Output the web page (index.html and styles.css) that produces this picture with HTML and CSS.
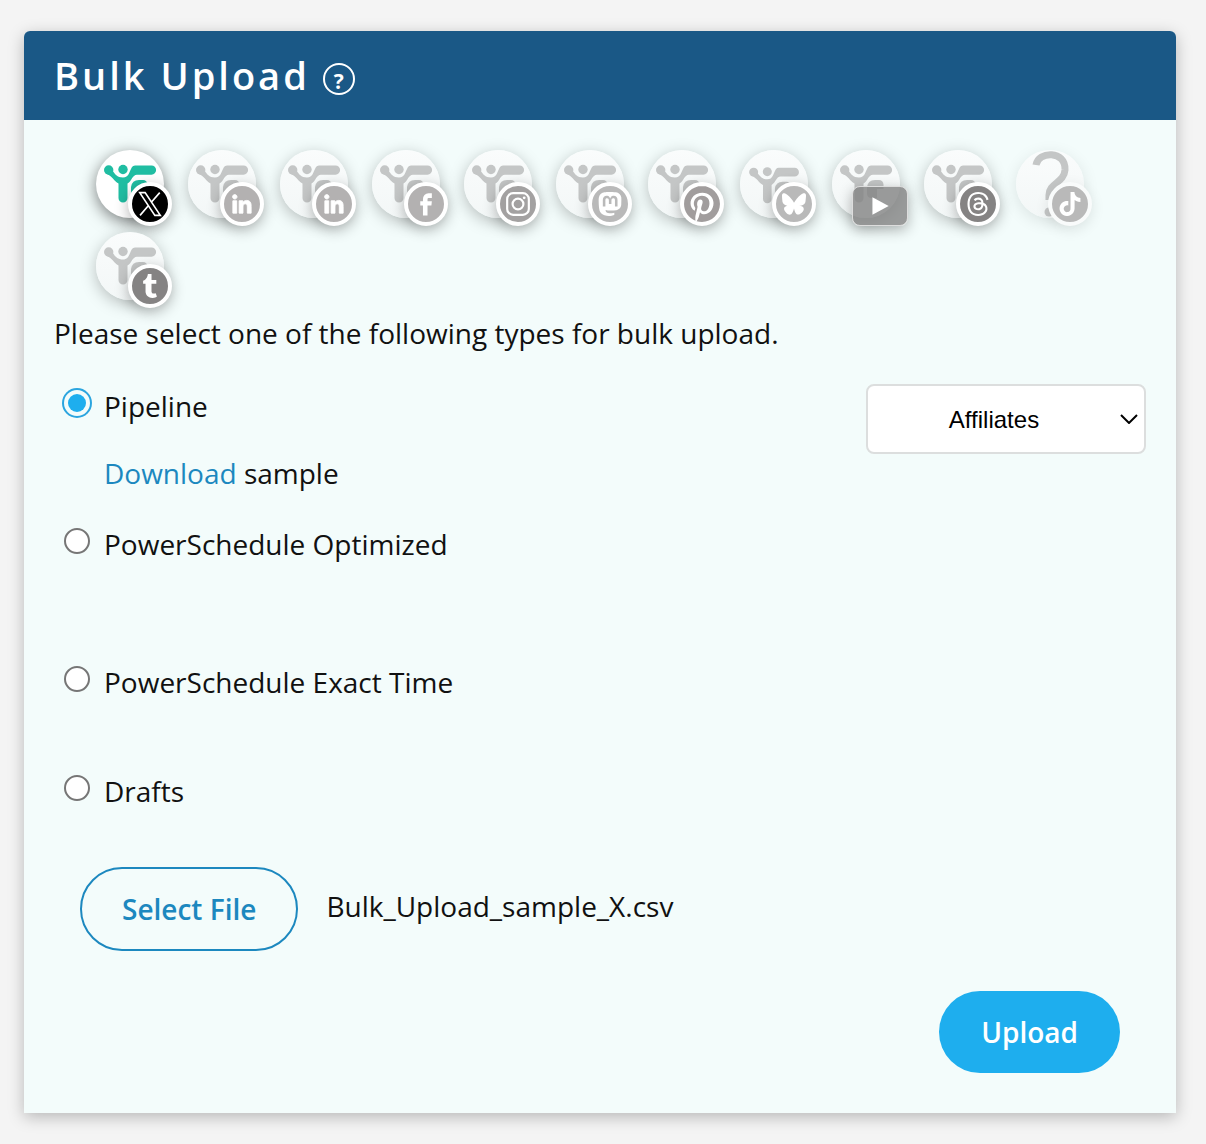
FILE: index.html
```html
<!DOCTYPE html>
<html lang="en">
<head>
<meta charset="UTF-8">
<meta name="viewport" content="width=device-width, initial-scale=1.0">
<title>Bulk Upload</title>
<link rel="stylesheet" href="styles.css">
</head>
<body>

<!-- shared icons -->
<svg class="sprite" aria-hidden="true">
    <symbol id="logo" viewBox="0 0 68 68">
        <circle cx="12.7" cy="20" r="4.7"/>
        <circle cx="27" cy="19.5" r="4.7"/>
        <path d="M39 15.500H55.500a4.600 4.600 0 0 1 0 9.200H41C36 25 36 31 31.500 33.500V48a4.500 4.500 0 0 1-9 0V33.500C18 31 16 26 11 24L16 20C19 24 21 27.500 27 27.500S33 22 36 17Q37 15.500 39 15.500Z"/>
        <path d="M35 44V37Q36 30 43 30H47a4.500 4.500 0 0 1 4.500 4.500V39H45V48H39.500A4.500 4.500 0 0 1 35 44Z"/>
    </symbol>
    <symbol id="unknown" viewBox="0 0 68 68">
        <path d="M20 15C22 1 50 0 49 20C48 33 33 33 33 45V50" fill="none" stroke="currentColor" stroke-width="7"/>
        <circle cx="33" cy="62" r="4.500"/>
    </symbol>
    <symbol id="x" viewBox="0 0 24 24">
        <path d="M2.500 1.500H7.500L21.500 22.500H16.500ZM21 1.500L13 10.700M10.800 13.200L2.800 22.500" fill="none" stroke="currentColor" stroke-width="1.500"/>
    </symbol>
    <symbol id="linkedin" viewBox="0 0 24 24">
        <path d="M20.447 20.452h-3.554v-5.569c0-1.328-.027-3.037-1.852-3.037-1.853 0-2.136 1.445-2.136 2.939v5.667H9.351V9h3.414v1.561h.046c.477-.9 1.637-1.85 3.37-1.85 3.601 0 4.267 2.370 4.267 5.455v6.286zM5.337 7.433c-1.144 0-2.063-.926-2.063-2.065 0-1.138.92-2.063 2.063-2.063 1.140 0 2.064.925 2.064 2.063 0 1.139-.925 2.065-2.064 2.065zm1.782 13.019H3.555V9h3.564v11.452z" stroke="currentColor" stroke-width=".8"/>
    </symbol>
    <symbol id="facebook" viewBox="0 0 24 24">
        <path d="M9.198 22.500h4.200v-9.010h3.604l.396-3.980h-4V7.500a1 1 0 0 1 1-1h3v-4.500h-3a5.200 5.200 0 0 0-5.200 5.500v2.010h-2.500v3.980h2.500z"/>
    </symbol>
    <symbol id="instagram" viewBox="0 0 24 24">
        <g fill="none" stroke="currentColor" stroke-width="2"><rect x="2" y="2" width="20" height="20" rx="5.500"/><circle cx="12" cy="12" r="5"/></g>
        <circle cx="17.700" cy="6.300" r="1.300"/>
    </symbol>
    <symbol id="mastodon" viewBox="0 0 24 24">
        <path d="M23.268 5.313c-.35-2.578-2.617-4.610-5.304-5.004C17.510.242 15.792 0 11.813 0h-.03c-3.980 0-4.835.242-5.288.309C3.882.692 1.496 2.518.917 5.127.640 6.412.610 7.837.661 9.143c.074 1.874.088 3.745.260 5.611.118 1.240.325 2.470.620 3.680.550 2.237 2.777 4.098 4.960 4.857 2.336.792 4.849.923 7.256.380.265-.061.527-.132.786-.213.585-.184 1.270-.390 1.774-.753a.057.057 0 0 0 .023-.043v-1.809a.052.052 0 0 0-.020-.041.053.053 0 0 0-.046-.010 20.282 20.282 0 0 1-4.709.545c-2.730 0-3.463-1.284-3.674-1.818a5.593 5.593 0 0 1-.319-1.433.053.053 0 0 1 .066-.054c1.517.363 3.072.546 4.632.546.376 0 .750 0 1.125-.010 1.570-.044 3.224-.124 4.768-.422.038-.008.077-.015.110-.024 2.435-.464 4.753-1.920 4.989-5.604.008-.145.030-1.520.030-1.670.002-.512.167-3.630-.024-5.545zm-3.748 9.195h-2.561V8.290c0-1.309-.550-1.976-1.670-1.976-1.230 0-1.846.790-1.846 2.350v3.403h-2.546V8.663c0-1.560-.617-2.350-1.848-2.350-1.112 0-1.668.668-1.670 1.977v6.218H4.822V8.102c0-1.310.337-2.350 1.011-3.120.696-.770 1.608-1.164 2.740-1.164 1.311 0 2.302.500 2.962 1.498l.638 1.060.638-1.060c.660-.999 1.650-1.498 2.960-1.498 1.130 0 2.043.395 2.740 1.164.675.770 1.012 1.810 1.012 3.120z"/>
    </symbol>
    <symbol id="pinterest" viewBox="0 0 24 24">
        <path d="M12.017 0C5.396 0 .029 5.367.029 11.987c0 5.079 3.158 9.417 7.618 11.162-.105-.949-.199-2.403.041-3.439.219-.937 1.406-5.957 1.406-5.957s-.359-.720-.359-1.781c0-1.663.967-2.911 2.168-2.911 1.024 0 1.518.769 1.518 1.688 0 1.029-.653 2.567-.992 3.992-.285 1.193.600 2.165 1.775 2.165 2.128 0 3.768-2.245 3.768-5.487 0-2.861-2.063-4.869-5.008-4.869-3.410 0-5.409 2.562-5.409 5.199 0 1.033.394 2.143.889 2.741.099.120.112.225.085.345-.090.375-.293 1.199-.334 1.363-.053.225-.172.271-.401.165-1.495-.690-2.433-2.878-2.433-4.646 0-3.776 2.748-7.252 7.920-7.252 4.158 0 7.392 2.967 7.392 6.923 0 4.135-2.607 7.462-6.233 7.462-1.214 0-2.354-.629-2.758-1.379l-.749 2.848c-.269 1.045-1.004 2.352-1.498 3.146 1.123.345 2.306.535 3.550.535 6.607 0 11.985-5.365 11.985-11.987C23.970 5.390 18.592.026 11.985.026z"/>
    </symbol>
    <symbol id="bluesky" viewBox="0 0 24 24">
        <path d="M12 10.800c-1.087-2.114-4.046-6.053-6.798-7.995C2.566.944 1.561 1.266.902 1.565.139 1.908 0 3.080 0 3.768c0 .690.378 5.650.624 6.479.815 2.736 3.713 3.660 6.383 3.364-3.912.580-7.387 2.005-2.830 7.078 5.013 5.190 6.870-1.113 7.823-4.308.953 3.195 2.050 9.271 7.733 4.308 4.267-4.308 1.172-6.498-2.740-7.078 2.670.297 5.568-.628 6.383-3.364.246-.828.624-5.790.624-6.478 0-.690-.139-1.861-.902-2.206-.659-.298-1.664-.620-4.300 1.240C16.046 4.748 13.087 8.687 12 10.800Z"/>
    </symbol>
    <symbol id="threads" viewBox="0 0 24 24">
        <path d="M12.186 24h-.007c-3.581-.024-6.334-1.205-8.184-3.509C2.350 18.440 1.500 15.586 1.472 12.010v-.017c.030-3.579.879-6.430 2.525-8.482C5.845 1.205 8.600.024 12.180 0h.014c2.746.020 5.043.725 6.826 2.098 1.677 1.290 2.858 3.130 3.509 5.467l-2.040.569c-1.104-3.960-3.898-5.984-8.304-6.015-2.910.022-5.110.936-6.540 2.717C4.307 6.504 3.616 8.914 3.589 12c.027 3.086.718 5.496 2.057 7.164 1.430 1.783 3.631 2.698 6.540 2.717 2.623-.020 4.358-.631 5.800-2.045 1.647-1.613 1.618-3.593 1.090-4.798-.310-.710-.873-1.300-1.634-1.750-.192 1.352-.622 2.446-1.284 3.272-.886 1.102-2.140 1.704-3.730 1.790-1.202.065-2.361-.218-3.259-.801-1.063-.689-1.685-1.740-1.752-2.964-.065-1.190.408-2.285 1.330-3.082.880-.760 2.119-1.207 3.583-1.291a13.853 13.853 0 0 1 3.020.142c-.126-.742-.375-1.332-.750-1.757-.513-.586-1.308-.883-2.359-.890h-.029c-.844 0-1.992.232-2.721 1.320L7.734 7.847c.980-1.454 2.568-2.256 4.478-2.256h.044c3.194.020 5.097 1.975 5.287 5.388.108.046.216.094.321.142 1.490.700 2.580 1.761 3.154 3.070.797 1.820.871 4.790-1.548 7.158-1.850 1.810-4.094 2.628-7.277 2.650Zm1.003-11.690c-.242 0-.487.007-.739.021-1.836.103-2.980.946-2.916 2.143.067 1.256 1.452 1.839 2.784 1.767 1.224-.065 2.818-.543 3.086-3.710a10.500 10.500 0 0 0-2.215-.221z"/>
    </symbol>
    <symbol id="tiktok" viewBox="0 0 24 24">
        <path d="M12.525.020c1.310-.020 2.610-.010 3.910-.020.080 1.530.630 3.090 1.750 4.170 1.120 1.110 2.700 1.620 4.240 1.790v4.030c-1.440-.050-2.890-.350-4.200-.970-.570-.260-1.100-.590-1.620-.930-.010 2.920.010 5.840-.020 8.750-.080 1.400-.540 2.790-1.350 3.940-1.310 1.920-3.580 3.170-5.910 3.210-1.430.080-2.860-.310-4.080-1.030-2.020-1.190-3.440-3.370-3.650-5.710-.020-.500-.030-1-.010-1.490.180-1.900 1.120-3.720 2.580-4.960 1.660-1.440 3.980-2.130 6.150-1.720.020 1.480-.040 2.960-.040 4.440-.990-.320-2.150-.230-3.020.370-.630.410-1.110 1.040-1.360 1.750-.210.510-.150 1.070-.140 1.610.240 1.640 1.820 3.020 3.500 2.870 1.120-.010 2.190-.660 2.770-1.610.190-.330.400-.670.410-1.060.100-1.790.060-3.570.070-5.360.010-4.030-.010-8.050.020-12.070z"/>
    </symbol>
    <symbol id="tumblr" viewBox="0 0 24 24">
        <path d="M14.563 24c-5.093 0-7.031-3.756-7.031-6.411V9.747H5.116V6.648c3.630-1.313 4.512-4.596 4.710-6.469C9.840.051 9.941 0 9.999 0h3.517v6.114h4.801v3.633h-4.820v7.470c.016 1.001.375 2.371 2.207 2.371h.090c.631-.020 1.486-.205 1.936-.419l1.156 3.425c-.436.636-2.400 1.374-4.156 1.404h-.178z"/>
    </symbol>
    <symbol id="play" viewBox="0 0 24 24">
        <path d="M5 4L20 12L5 20Z"/>
    </symbol>
</svg>

<main class="card">
    <header class="card-header">
        <h1>Bulk Upload</h1>
        <button type="button" class="help">?</button>
    </header>

    <form class="card-body">
        <div class="accounts">
            <button type="button" class="account active" aria-label="X"><svg class="logo"><use href="#logo"/></svg><span class="badge black"><svg class="wide"><use href="#x"/></svg></span></button>
            <button type="button" class="account" aria-label="LinkedIn"><svg class="logo"><use href="#logo"/></svg><span class="badge"><svg class="wide"><use href="#linkedin"/></svg></span></button>
            <button type="button" class="account" aria-label="LinkedIn page"><svg class="logo"><use href="#logo"/></svg><span class="badge"><svg class="wide"><use href="#linkedin"/></svg></span></button>
            <button type="button" class="account" aria-label="Facebook"><svg class="logo"><use href="#logo"/></svg><span class="badge"><svg class="wide"><use href="#facebook"/></svg></span></button>
            <button type="button" class="account" aria-label="Instagram"><svg class="logo"><use href="#logo"/></svg><span class="badge medium"><svg class="wide"><use href="#instagram"/></svg></span></button>
            <button type="button" class="account" aria-label="Mastodon"><svg class="logo"><use href="#logo"/></svg><span class="badge light"><svg><use href="#mastodon"/></svg></span></button>
            <button type="button" class="account" aria-label="Pinterest"><svg class="logo"><use href="#logo"/></svg><span class="badge full"><svg><use href="#pinterest"/></svg></span></button>
            <button type="button" class="account low" aria-label="Bluesky"><svg class="logo"><use href="#logo"/></svg><span class="badge light"><svg><use href="#bluesky"/></svg></span></button>
            <button type="button" class="account" aria-label="YouTube"><svg class="logo"><use href="#logo"/></svg><span class="badge video"><svg class="wide"><use href="#play"/></svg></span></button>
            <button type="button" class="account" aria-label="Threads"><svg class="logo"><use href="#logo"/></svg><span class="badge dark"><svg><use href="#threads"/></svg></span></button>
            <button type="button" class="account missing" aria-label="TikTok"><svg class="logo"><use href="#unknown"/></svg><span class="badge light"><svg><use href="#tiktok"/></svg></span></button>
            <button type="button" class="account" aria-label="Tumblr"><svg class="logo"><use href="#logo"/></svg><span class="badge dark"><svg><use href="#tumblr"/></svg></span></button>
        </div>

        <p class="intro">Please select one of the following types for bulk upload.</p>

        <div class="choices">
            <div class="types">
                <div class="type">
                    <input type="radio" name="type" id="pipeline" checked>
                    <label for="pipeline">Pipeline</label>
                    <p class="sample"><a href="#">Download</a> sample</p>
                </div>
                <div class="type">
                    <input type="radio" name="type" id="optimized">
                    <label for="optimized">PowerSchedule Optimized</label>
                </div>
                <div class="type">
                    <input type="radio" name="type" id="exact">
                    <label for="exact">PowerSchedule Exact Time</label>
                </div>
                <div class="type short">
                    <input type="radio" name="type" id="drafts">
                    <label for="drafts">Drafts</label>
                </div>
            </div>
            <div class="select-wrap">
                <select class="category" aria-label="Category">
                    <option>Affiliates</option>
                </select>
                <svg class="chevron" viewBox="0 0 18 10"><path d="M1 1L9 9L17 1"/></svg>
            </div>
        </div>

        <div class="file-row">
            <button type="button" class="btn btn-outline">Select File</button>
            <span class="file-name">Bulk_Upload_sample_X.csv</span>
        </div>

        <div class="actions">
            <button type="submit" class="btn btn-primary">Upload</button>
        </div>
    </form>
</main>

</body>
</html>
```

FILE: styles.css
```css
* {
    box-sizing: border-box;
}

body {
    margin: 0;
    padding: 31px 30px 31px 24px;
    background-color: #f4f4f4;
    color: #111;
    font-family: "Open Sans", sans-serif;
    font-size: 28px;
    line-height: 40px;
}

button, p {
    margin: 0;
    padding: 0;
}

button {
    font-family: inherit;
    cursor: pointer;
}

.sprite {
    display: none;
}

.card {
    background-color: #f3fcfb;
    border-radius: 6px 6px 0 0;
    box-shadow: 0 4px 16px rgba(0, 0, 0, 0.25);
}

/* Header */
.card-header {
    display: flex;
    align-items: center;
    gap: 13px;
    padding: 18px 30px;
    background-color: #1a5886;
    border-radius: 6px 6px 0 0;
    color: #fff;
}

.card-header h1 {
    margin: 0;
    font-size: 38px;
    font-weight: 600;
    letter-spacing: 3px;
    line-height: 53px;
}

.help {
    width: 32px;
    height: 32px;
    margin-top: 6px;
    padding-top: 5px;
    background: none;
    border: 2px solid #fff;
    border-radius: 50%;
    color: #fff;
    font-size: 21px;
    font-weight: 700;
    line-height: 23px;
}

/* Accounts */
.card-body {
    padding: 30px 30px 40px;
}

.accounts {
    display: flex;
    flex-wrap: wrap;
    gap: 14px 24px;
    padding-left: 42px;
}

.account {
    position: relative;
    width: 68px;
    height: 68px;
    background: linear-gradient(#fafcfc, #f3f7f7);
    border: 0;
    border-radius: 50%;
    box-shadow: 0 4px 16px rgba(0, 0, 0, 0.25);
    color: #c4c6c6;
}

.account.active {
    background: #fff;
    box-shadow: 0 4px 16px rgba(0, 0, 0, 0.5);
    color: #20bda2;
}

.account.low .logo {
    padding-top: 3px;
}

.account.missing {
    box-shadow: 0 4px 16px rgba(0, 0, 0, 0.1);
}

.logo {
    display: block;
    width: 68px;
    height: 68px;
    fill: currentColor;
}

.badge {
    position: absolute;
    left: 32px;
    top: 32px;
    display: flex;
    align-items: center;
    justify-content: center;
    width: 44px;
    height: 44px;
    background-color: #b3b1b1;
    border: 4px solid #fff;
    border-radius: 50%;
    box-shadow: 0 4px 14px rgba(0, 0, 0, 0.3);
    color: #fff;
}

.badge svg {
    flex-shrink: 0;
    width: 24px;
    height: 24px;
    fill: currentColor;
}

.badge svg.wide {
    width: 26px;
    height: 26px;
}

.badge.black {
    background-color: #000;
}

.badge.medium {
    background-color: #a3a1a1;
}

.badge.light {
    background-color: #b9b9b9;
}

.badge.dark {
    background-color: #858383;
}

.badge.full {
    background-color: #fff;
    color: #a19d9d;
}

.badge.full svg {
    width: 36px;
    height: 36px;
}

.badge.video {
    left: 20px;
    top: 36px;
    width: 56px;
    height: 40px;
    background-color: rgba(130, 130, 130, 0.8);
    border: 1px solid #ddd;
    border-radius: 8px;
}

.missing .badge {
    border-color: #f9fbfb;
    box-shadow: 0 4px 14px rgba(0, 0, 0, 0.1);
}

/* Upload types */
.intro {
    margin-top: 13px;
}

.choices {
    display: flex;
    justify-content: space-between;
    align-items: flex-start;
    margin-top: 31px;
}

.type {
    display: grid;
    grid-template-columns: 26px auto;
    column-gap: 14px;
    align-content: start;
    height: 138px;
    padding: 2px 0 0 10px;
}

.type:nth-child(3) {
    height: 109px;
}

.type.short {
    height: 80px;
}

.type input {
    appearance: none;
    width: 26px;
    height: 26px;
    margin: 4px 0 0;
    padding: 2px;
    background-color: #fff;
    border: 2px solid #767676;
    border-radius: 50%;
}

.type input:checked {
    background: #1eaeee content-box;
    border-color: #f3fcfb;
    box-shadow: 0 0 0 2px #2ba5df;
}

.sample {
    grid-column: 2;
    margin-top: 27px;
}

.sample a {
    color: #1c88bf;
    text-decoration: none;
}

.select-wrap {
    position: relative;
    width: 280px;
}

.category {
    appearance: none;
    display: block;
    width: 100%;
    height: 70px;
    padding: 0 24px 0 0;
    background-color: #fff;
    border: 2px solid #dcdede;
    border-radius: 8px;
    color: #000;
    font-family: "Liberation Sans", Arial, sans-serif;
    font-size: 24px;
    text-align: center;
    text-align-last: center;
}

.chevron {
    position: absolute;
    right: 8px;
    top: 30px;
    width: 18px;
    height: 10px;
    fill: none;
    stroke: #000;
    stroke-width: 2;
    pointer-events: none;
}

/* Buttons */
.btn {
    border-radius: 42px;
    font-size: 28px;
    font-weight: 600;
    line-height: 40px;
}

.btn-outline {
    padding: 20px 40px;
    background: none;
    border: 2px solid #1c88bf;
    color: #1c88bf;
}

.btn-primary {
    padding: 21px 42px;
    background-color: #1eaeee;
    border: 0;
    color: #fff;
}

.file-row {
    display: flex;
    align-items: center;
    gap: 28px;
    margin-top: 18px;
    padding-left: 26px;
}

.file-name {
    padding-bottom: 6px;
}

.actions {
    display: flex;
    justify-content: flex-end;
    margin-top: 40px;
    padding-right: 26px;
}
```
